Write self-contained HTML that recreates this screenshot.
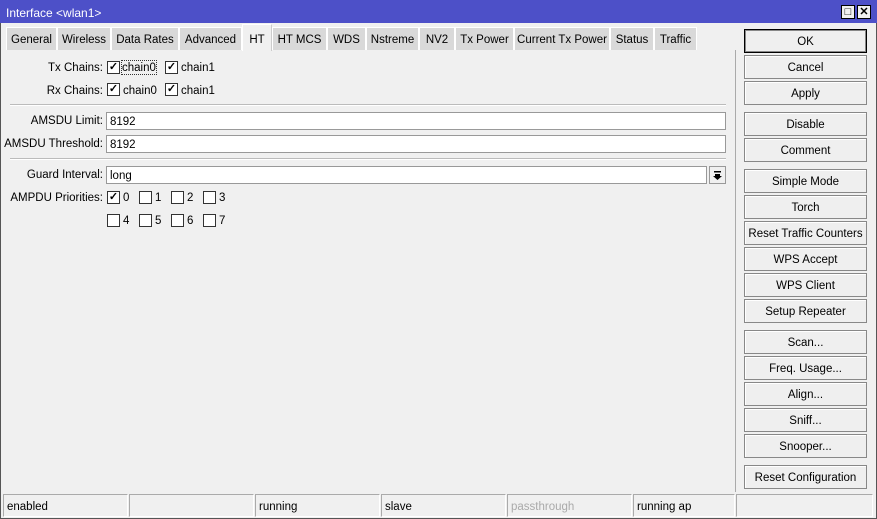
<!DOCTYPE html><html><head><style>
*{box-sizing:border-box;margin:0;padding:0}
body{width:877px;height:519px;background:#f0f0f0;font-family:"Liberation Sans",sans-serif;font-size:11.5px;color:#000;position:relative;overflow:hidden;white-space:nowrap}
.a{position:absolute}
.frame{left:0;top:0;width:877px;height:519px;border:1px solid #555}
.title{left:0;top:0;width:877px;height:23px;background:#4d50c8;color:#fff;padding:6px 6px;font-size:12px}
.wb{width:14px;height:14px;background:#f0f0f0;border:1px solid #000;top:5px;font-size:11px;line-height:12px;text-align:center;font-weight:bold;color:#000}
.tab{top:27px;height:23px;background:#d9d9d9;border:1px solid #fff;border-bottom:none;text-align:center;line-height:25px}
.tab.on{top:24px;height:27px;background:#f0f0f0;line-height:30px;border-color:#fff #ccc #fff #fff}
.panel{left:6px;top:50px;width:730px;height:442px;border-right:1px solid #aaa}
.btn{left:744px;width:123px;height:24px;border:1px solid #888;background:#efefef;text-align:center;line-height:24px;box-shadow:inset 1px 1px #fff}
.lbl{text-align:right;width:100px;left:3px}
.cb{width:13px;height:13px;border:1px solid #333;background:#fff;font-size:11px;line-height:11px;text-align:center;font-weight:bold}
.inp{left:106px;width:620px;height:18px;border:1px solid #999;background:#fff;padding:2px 3px;line-height:14px}
.sep{left:10px;width:716px;height:2px;border-top:1px solid #bbb;border-bottom:1px solid #fff}
.st{top:494px;height:23px;border:1px solid #aaa;border-right-color:#fff;border-bottom-color:#fff;padding:5px 3px;line-height:14px}
</style></head><body>
<div class="a frame"></div>
<div class="a title">Interface &lt;wlan1&gt;</div>
<div class="a wb" style="left:841px">□</div><div class="a wb" style="left:857px">✕</div>
<div class="a tab" style="left:6px;width:51px">General</div>
<div class="a tab" style="left:57px;width:54px">Wireless</div>
<div class="a tab" style="left:111px;width:68px">Data Rates</div>
<div class="a tab" style="left:179px;width:63px">Advanced</div>
<div class="a tab on" style="left:242px;width:30px">HT</div>
<div class="a tab" style="left:272px;width:55px">HT MCS</div>
<div class="a tab" style="left:327px;width:39px">WDS</div>
<div class="a tab" style="left:366px;width:53px">Nstreme</div>
<div class="a tab" style="left:419px;width:36px">NV2</div>
<div class="a tab" style="left:455px;width:59px">Tx Power</div>
<div class="a tab" style="left:514px;width:96px">Current Tx Power</div>
<div class="a tab" style="left:610px;width:44px">Status</div>
<div class="a tab" style="left:654px;width:43px">Traffic</div>
<div class="a panel"></div>
<div class="a lbl" style="top:62px">Tx Chains:</div>
<div class="a cb" style="left:107px;top:61px">✓</div><div class="a" style="left:122px;top:61px;outline:1px dotted #333;padding-top:1px">chain0</div>
<div class="a cb" style="left:165px;top:61px">✓</div><div class="a" style="left:181px;top:62px">chain1</div>
<div class="a lbl" style="top:85px">Rx Chains:</div>
<div class="a cb" style="left:107px;top:83px">✓</div><div class="a" style="left:123px;top:85px">chain0</div>
<div class="a cb" style="left:165px;top:83px">✓</div><div class="a" style="left:181px;top:85px">chain1</div>
<div class="a sep" style="top:104px"></div>
<div class="a lbl" style="top:115px">AMSDU Limit:</div><div class="a inp" style="top:112px">8192</div>
<div class="a lbl" style="top:138px">AMSDU Threshold:</div><div class="a inp" style="top:135px">8192</div>
<div class="a sep" style="top:158px"></div>
<div class="a lbl" style="top:169px">Guard Interval:</div><div class="a inp" style="top:166px;width:601px">long</div>
<div class="a" style="left:709px;top:166px;width:17px;height:18px;border:1px solid #999;background:#f0f0f0">
<svg width="15" height="16" style="position:absolute;left:0;top:0"><rect x="4" y="4" width="7" height="1.5" fill="#000"/><path d="M5 7h5v2h2l-4.5 4-4.5-4h2z" fill="#000"/></svg></div>
<div class="a lbl" style="top:192px">AMPDU Priorities:</div>
<div class="a cb" style="left:107px;top:191px">✓</div><div class="a" style="left:123px;top:192px">0</div>
<div class="a cb" style="left:139px;top:191px"></div><div class="a" style="left:155px;top:192px">1</div>
<div class="a cb" style="left:171px;top:191px"></div><div class="a" style="left:187px;top:192px">2</div>
<div class="a cb" style="left:203px;top:191px"></div><div class="a" style="left:219px;top:192px">3</div>
<div class="a cb" style="left:107px;top:214px"></div><div class="a" style="left:123px;top:215px">4</div>
<div class="a cb" style="left:139px;top:214px"></div><div class="a" style="left:155px;top:215px">5</div>
<div class="a cb" style="left:171px;top:214px"></div><div class="a" style="left:187px;top:215px">6</div>
<div class="a cb" style="left:203px;top:214px"></div><div class="a" style="left:219px;top:215px">7</div>
<div class="a btn" style="top:29px;border:1px solid #000;box-shadow:inset 0 0 0 1px #888">OK</div>
<div class="a btn" style="top:55px">Cancel</div>
<div class="a btn" style="top:81px">Apply</div>
<div class="a btn" style="top:112px">Disable</div>
<div class="a btn" style="top:138px">Comment</div>
<div class="a btn" style="top:169px">Simple Mode</div>
<div class="a btn" style="top:195px">Torch</div>
<div class="a btn" style="top:221px">Reset Traffic Counters</div>
<div class="a btn" style="top:247px">WPS Accept</div>
<div class="a btn" style="top:273px">WPS Client</div>
<div class="a btn" style="top:299px">Setup Repeater</div>
<div class="a btn" style="top:330px">Scan...</div>
<div class="a btn" style="top:356px">Freq. Usage...</div>
<div class="a btn" style="top:382px">Align...</div>
<div class="a btn" style="top:408px">Sniff...</div>
<div class="a btn" style="top:434px">Snooper...</div>
<div class="a btn" style="top:465px">Reset Configuration</div>
<div class="a st" style="left:3px;width:125px">enabled</div>
<div class="a st" style="left:129px;width:125px"></div>
<div class="a st" style="left:255px;width:125px">running</div>
<div class="a st" style="left:381px;width:125px">slave</div>
<div class="a st" style="left:507px;width:125px;color:#aaa">passthrough</div>
<div class="a st" style="left:633px;width:102px">running ap</div>
<div class="a st" style="left:736px;width:137px"></div>
</body></html>
